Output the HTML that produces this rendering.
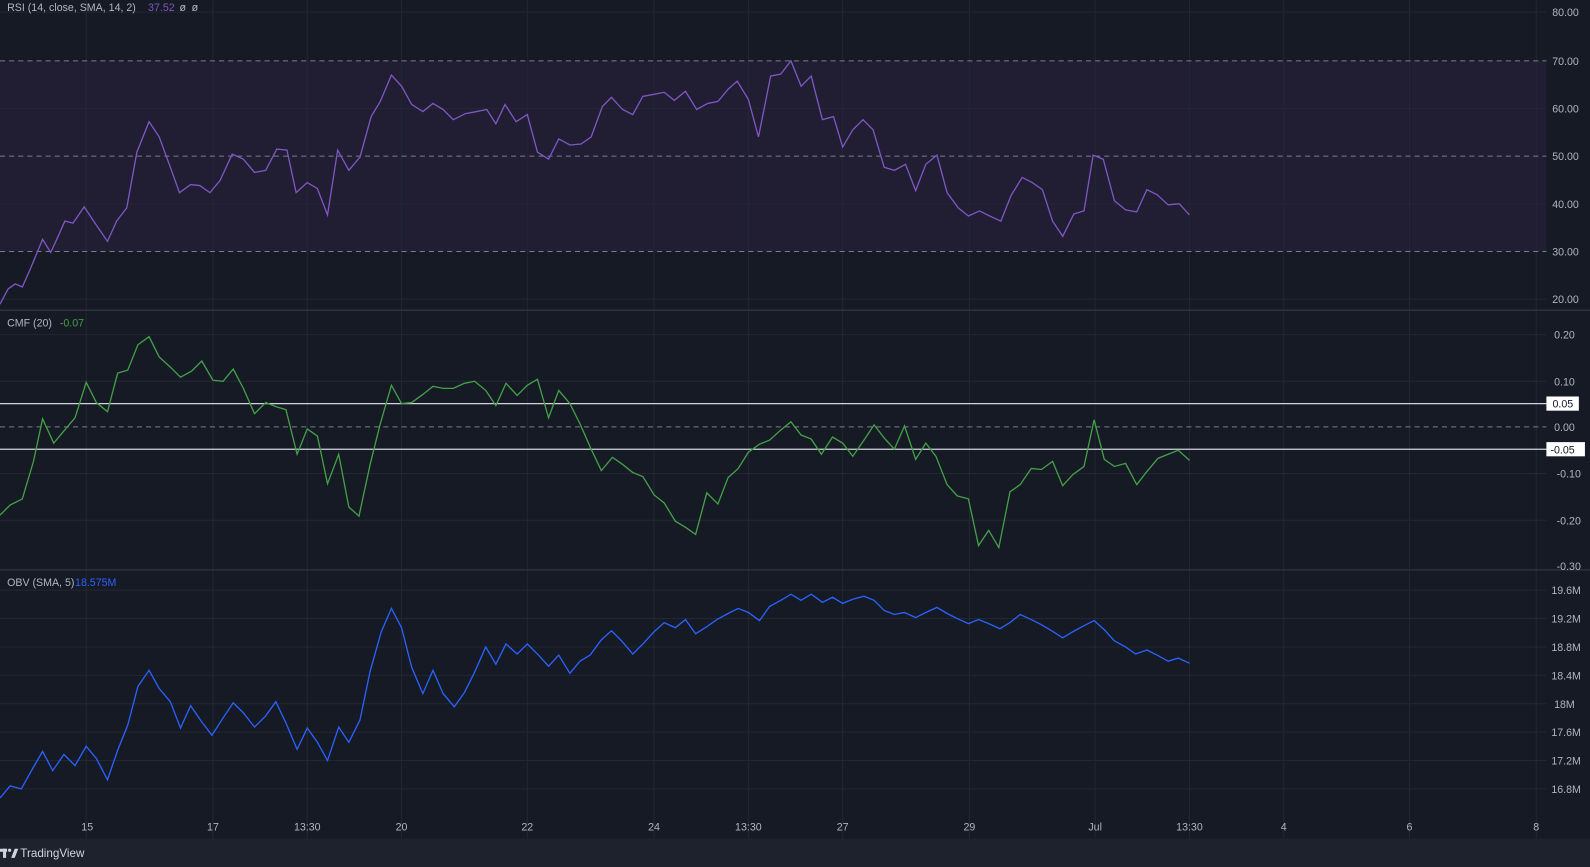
<!DOCTYPE html>
<html><head><meta charset="utf-8"><style>
html,body{margin:0;padding:0;background:#161a25;width:1590px;height:867px;overflow:hidden;font-family:"Liberation Sans",sans-serif}
svg text{font-family:"Liberation Sans",sans-serif;font-size:10.5px;fill:#b2b5be}
</style></head><body>
<svg width="1590" height="867" viewBox="0 0 1590 867" xmlns="http://www.w3.org/2000/svg">
<rect width="1590" height="867" fill="#161a25"/>
<g transform="scale(1.01403)">
<rect x="0" y="60" width="1525" height="188" fill="#211d33"/>
<g stroke="#232734" stroke-width="1">
<line x1="85" y1="0" x2="85" y2="827"/><line x1="210" y1="0" x2="210" y2="827"/><line x1="303" y1="0" x2="303" y2="827"/><line x1="396" y1="0" x2="396" y2="827"/><line x1="520" y1="0" x2="520" y2="827"/><line x1="645" y1="0" x2="645" y2="827"/><line x1="738" y1="0" x2="738" y2="827"/><line x1="831" y1="0" x2="831" y2="827"/><line x1="956" y1="0" x2="956" y2="827"/><line x1="1080" y1="0" x2="1080" y2="827"/><line x1="1173" y1="0" x2="1173" y2="827"/><line x1="1266" y1="0" x2="1266" y2="827"/><line x1="1390" y1="0" x2="1390" y2="827"/><line x1="1515" y1="0" x2="1515" y2="827"/>
<line x1="0" y1="12" x2="1525" y2="12"/><line x1="0" y1="107" x2="1525" y2="107"/><line x1="0" y1="201" x2="1525" y2="201"/><line x1="0" y1="295" x2="1525" y2="295"/>
<line x1="0" y1="330" x2="1525" y2="330"/><line x1="0" y1="376" x2="1525" y2="376"/><line x1="0" y1="467" x2="1525" y2="467"/><line x1="0" y1="513" x2="1525" y2="513"/>
<line x1="0" y1="582" x2="1525" y2="582"/><line x1="0" y1="610" x2="1525" y2="610"/><line x1="0" y1="638" x2="1525" y2="638"/><line x1="0" y1="666" x2="1525" y2="666"/><line x1="0" y1="694" x2="1525" y2="694"/><line x1="0" y1="722" x2="1525" y2="722"/><line x1="0" y1="750" x2="1525" y2="750"/><line x1="0" y1="778" x2="1525" y2="778"/>
</g>
<g stroke="#2e3240" stroke-width="1.5"><line x1="0" y1="306" x2="1590" y2="306"/><line x1="0" y1="562" x2="1590" y2="562"/></g>
<g stroke="#7a7e8c" stroke-width="1" stroke-dasharray="5,4">
<line x1="0" y1="60" x2="1525" y2="60"/><line x1="0" y1="154" x2="1525" y2="154"/><line x1="0" y1="248" x2="1525" y2="248"/><line x1="0" y1="421" x2="1525" y2="421"/>
</g>
<g stroke="#d1d4dc" stroke-width="1.2"><line x1="0" y1="398" x2="1525" y2="398"/><line x1="0" y1="443" x2="1525" y2="443"/></g>
<polyline fill="none" stroke="#7e57c2" stroke-width="1.3" points="0,300 8,285 15,280 22,283 30,265 42,236 50,249 56,236 64,218 72,220 83,204 95,222 106,238 115,218 125,205 135,150 147,120 157,135 168,165 177,190 188,182 197,183 207,190 217,178 229,152 240,157 251,170 262,168 273,147 283,148 292,190 303,180 313,186 323,212 333,148 344,168 355,155 366,115 375,100 386,74 396,85 406,103 417,110 427,102 437,108 447,118 459,112 470,110 480,108 489,122 498,103 509,120 520,113 530,150 541,157 551,137 562,143 573,142 583,135 594,105 603,96 614,108 624,113 634,95 645,93 655,91 665,99 676,90 687,108 698,102 708,100 718,88 727,80 738,98 748,135 760,75 770,73 780,60 790,85 800,75 811,118 822,115 831,145 841,128 851,118 861,128 872,165 882,168 893,162 903,188 913,162 924,153 934,190 945,205 955,213 966,208 976,213 987,218 997,193 1008,175 1018,180 1028,187 1038,218 1048,233 1059,211 1069,208 1078,153 1088,157 1099,198 1110,207 1121,209 1131,187 1141,192 1152,202 1163,201 1173,212"/>
<polyline fill="none" stroke="#43a047" stroke-width="1.3" points="0,508 10,498 22,492 33,455 42,413 53,437 63,425 74,412 85,377 95,397 106,406 116,368 126,365 136,340 147,332 157,352 168,362 178,372 189,366 199,356 210,375 220,376 230,364 240,383 251,408 262,397 272,401 282,404 293,448 303,423 313,430 323,477 334,448 344,500 354,509 365,458 375,418 386,380 396,398 406,397 417,389 427,381 437,383 447,383 458,378 468,376 479,385 489,400 499,378 510,390 520,380 530,374 541,412 551,385 562,398 572,418 583,443 593,464 604,451 614,458 624,466 634,470 645,488 655,496 666,514 676,520 686,527 697,486 708,497 718,471 728,462 738,446 749,438 759,434 770,424 780,416 790,429 800,433 810,448 821,431 831,437 841,450 852,434 862,419 872,432 882,443 892,420 903,453 913,437 923,450 934,478 944,489 955,492 965,538 975,523 985,540 996,485 1006,478 1017,462 1027,463 1038,455 1048,479 1058,468 1069,460 1079,414 1089,453 1099,460 1110,457 1121,478 1131,465 1142,452 1152,448 1162,444 1173,454"/>
<polyline fill="none" stroke="#2962ff" stroke-width="1.3" points="0,787 10,775 21,778 31,760 42,741 52,760 63,744 74,755 85,736 95,748 106,769 116,740 126,715 136,677 147,661 157,679 168,692 178,718 188,696 199,712 209,725 220,708 230,693 240,703 251,717 262,706 272,692 282,713 293,739 303,718 313,732 323,750 334,717 344,732 355,710 365,662 376,623 386,600 396,619 406,658 417,684 427,661 437,684 448,697 458,683 468,663 479,638 489,655 499,635 510,645 520,635 531,646 541,657 551,646 562,664 572,652 582,646 593,631 603,622 613,632 624,645 634,635 645,623 655,614 666,619 676,611 686,625 697,618 707,611 718,605 728,600 738,604 749,612 759,598 770,592 780,586 790,592 800,586 811,594 821,589 831,595 841,591 852,588 862,592 872,602 882,606 892,604 903,609 913,604 924,599 934,605 944,610 955,615 965,611 975,615 986,620 996,614 1006,606 1017,611 1027,616 1037,622 1048,629 1058,623 1069,617 1079,612 1089,621 1099,632 1110,638 1120,645 1131,641 1141,646 1152,652 1162,649 1173,654"/>
<text x="7" y="11">RSI (14, close, SMA, 14, 2)</text><text x="146" y="11" style="fill:#7e57c2">37.52</text><text x="177" y="11">ø</text><text x="189" y="11">ø</text>
<text x="7" y="322">CMF (20)</text><text x="59" y="322" style="fill:#43a047">-0.07</text>
<text x="7" y="578">OBV (SMA, 5)</text><text x="74" y="578" style="fill:#2962ff">18.575M</text>
<g text-anchor="end">
<text x="1557" y="16">80.00</text><text x="1557" y="64">70.00</text><text x="1557" y="111">60.00</text><text x="1557" y="158">50.00</text><text x="1557" y="205">40.00</text><text x="1557" y="252">30.00</text><text x="1557" y="299">20.00</text>
<text x="1553" y="334">0.20</text><text x="1553" y="380">0.10</text><text x="1553" y="425">0.00</text><text x="1559" y="471">-0.10</text><text x="1559" y="517">-0.20</text><text x="1559" y="562">-0.30</text>
<text x="1559" y="586">19.6M</text><text x="1559" y="614">19.2M</text><text x="1559" y="642">18.8M</text><text x="1559" y="670">18.4M</text><text x="1553" y="698">18M</text><text x="1559" y="726">17.6M</text><text x="1559" y="754">17.2M</text><text x="1559" y="782">16.8M</text>
</g>
<rect x="1525" y="391" width="32" height="14" fill="#fff"/><text x="1531" y="402" style="fill:#131722">0.05</text>
<rect x="1525" y="436" width="38" height="14" fill="#fff"/><text x="1529" y="447" style="fill:#131722">-0.05</text>
<g text-anchor="middle">
<text x="86" y="819">15</text><text x="210" y="819">17</text><text x="303" y="819">13:30</text><text x="396" y="819">20</text><text x="520" y="819">22</text><text x="645" y="819">24</text><text x="738" y="819">13:30</text><text x="831" y="819">27</text><text x="956" y="819">29</text><text x="1080" y="819">Jul</text><text x="1173" y="819">13:30</text><text x="1266" y="819">4</text><text x="1390" y="819">6</text><text x="1515" y="819">8</text>
</g>
<rect x="0" y="827" width="1590" height="45" fill="#1e222d"/>
<g fill="#d1d4dc">
<rect x="0" y="837" width="7" height="3"/><rect x="3" y="837" width="3" height="9"/>
<circle cx="9.5" cy="838.5" r="1.6"/>
<polygon points="11,846 14.5,837 18,837 14.5,846"/>
</g>
<text x="20" y="845" style="fill:#d1d4dc;font-size:11.5px">TradingView</text>
</g>
</svg>
</body></html>
